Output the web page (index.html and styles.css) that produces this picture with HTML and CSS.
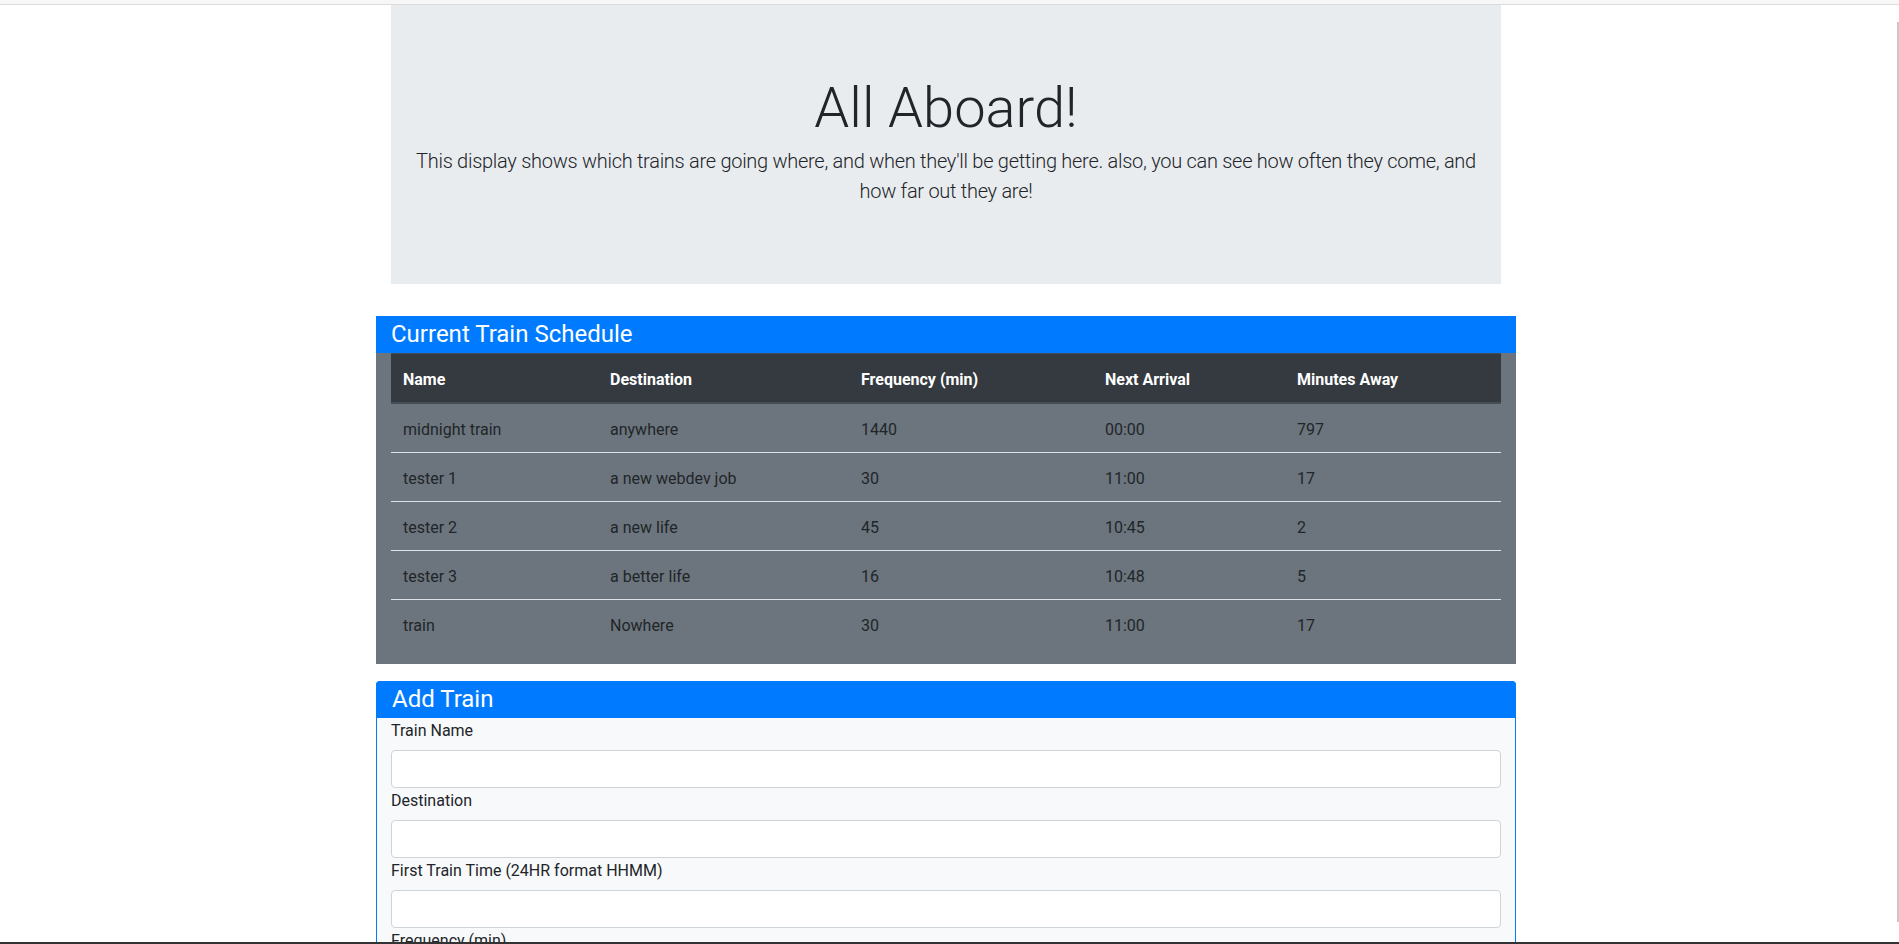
FILE: index.html
```html
<!DOCTYPE html>
<html lang="en">
<head>
<meta charset="utf-8">
<title>Train Scheduler</title>
<link rel="stylesheet" href="styles.css">
</head>
<body>
<div class="topbar"></div>
<div class="container">
  <div class="jumbotron">
    <h1 class="display">All Aboard!</h1>
    <p class="lead">This display shows which trains are going where, and when they'll be getting here. also, you can see how often they come, and how far out they are!</p>
  </div>

  <div class="card card-schedule">
    <h4 class="card-head">Current Train Schedule</h4>
    <div class="card-body">
      <table class="table">
        <thead>
          <tr>
            <th class="c1">Name</th>
            <th class="c2">Destination</th>
            <th class="c3">Frequency (min)</th>
            <th class="c4">Next Arrival</th>
            <th class="c5">Minutes Away</th>
          </tr>
        </thead>
        <tbody>
          <tr><td>midnight train</td><td>anywhere</td><td>1440</td><td>00:00</td><td>797</td></tr>
          <tr><td>tester 1</td><td>a new webdev job</td><td>30</td><td>11:00</td><td>17</td></tr>
          <tr><td>tester 2</td><td>a new life</td><td>45</td><td>10:45</td><td>2</td></tr>
          <tr><td>tester 3</td><td>a better life</td><td>16</td><td>10:48</td><td>5</td></tr>
          <tr><td>train</td><td>Nowhere</td><td>30</td><td>11:00</td><td>17</td></tr>
        </tbody>
      </table>
    </div>
  </div>

  <div class="card card-add">
    <h4 class="card-head rounded">Add Train</h4>
    <form class="card-form">
      <label for="name">Train Name</label>
      <input id="name" class="form-control" type="text">
      <label for="dest">Destination</label>
      <input id="dest" class="form-control" type="text">
      <label for="first">First Train Time (24HR format HHMM)</label>
      <input id="first" class="form-control" type="text">
      <label for="freq">Frequency (min)</label>
      <input id="freq" class="form-control" type="text">
      <button type="button" class="btn">Submit</button>
    </form>
  </div>
</div>
<div class="scrollthumb"></div>
<div class="bottomline"></div>
</body>
</html>
```

FILE: styles.css
```css
* { box-sizing: border-box; }

html, body {
  margin: 0;
  padding: 0;
}

body {
  padding-right: 7px;
  font-family: "Segoe UI", Roboto, "Liberation Sans", sans-serif;
  font-size: 16px;
  line-height: 1.5;
  color: #212529;
  background: #ffffff;
}

.topbar {
  height: 5px;
  margin-right: -7px;
  background: #f7f7f7;
  border-bottom: 1px solid #dcdcdc;
}

.container {
  width: 1140px;
  margin: 0 auto;
}

.jumbotron {
  margin: 0 15px 32px;
  padding: 64px 18px;
  background: #e9ecef;
  text-align: center;
}

.display {
  margin: 0 0 4px;
  padding-top: 6px;
  font-size: 56px;
  font-weight: 300;
  line-height: 1.2;
}

.lead {
  margin: 0 0 14px;
  font-size: 20px;
  font-weight: 300;
  line-height: 1.5;
  letter-spacing: -0.28px;
}

.card {
  display: flex;
  flex-direction: column;
}

.card-head {
  margin: 0;
  padding: 4px 15px;
  font-size: 24px;
  font-weight: 400;
  line-height: 29px;
  color: #ffffff;
  background: #007bff;
}

.card-head.rounded {
  border-radius: 4px 4px 0 0;
}

.card-schedule {
  background: #6c757d;
  margin-bottom: 17px;
}

.card-body {
  padding: 0 15px;
}

.table {
  width: 100%;
  border-collapse: collapse;
  margin-bottom: 16px;
  color: #212529;
}

.table th,
.table td {
  padding: 14px 12px 10px;
  text-align: left;
  vertical-align: top;
  line-height: 24px;
}

.table th {
  color: #ffffff;
  background: #343a40;
  font-weight: 700;
  border-top: 1px solid #454d55;
  border-bottom: 2px solid #454d55;
}

.table td {
  border-top: 1px solid #dee2e6;
}

.c1 { width: 207px; }
.c2 { width: 251px; }
.c3 { width: 244px; }
.c4 { width: 192px; }
.c5 { width: 216px; }

.card-add {
  border: 1px solid #007bff;
  border-radius: 4px 4px 0 0;
  background: #f8f9fa;
}

.card-add .card-head {
  margin: -1px -1px 0;
  padding-left: 16px;
}

.card-form {
  display: flex;
  flex-direction: column;
  padding: 0 14px 16px;
}

.card-form label {
  display: block;
  margin-bottom: 8px;
  padding-top: 1px;
  line-height: 23px;
}

.form-control {
  display: block;
  width: 100%;
  height: 38px;
  padding: 6px 12px;
  font: inherit;
  color: #495057;
  background: #ffffff;
  border: 1px solid #ced4da;
  border-radius: 4px;
}

.btn {
  align-self: flex-start;
  margin-top: 8px;
  padding: 6px 12px;
  font: inherit;
  color: #fff;
  background: #007bff;
  border: 1px solid #007bff;
  border-radius: 4px;
}

.scrollthumb {
  position: fixed;
  top: 22px;
  right: 0;
  width: 2px;
  height: 900px;
  background: #c8c8c8;
}

.bottomline {
  position: fixed;
  left: 0;
  right: 0;
  bottom: 0;
  height: 2px;
  background: #333333;
}
```
